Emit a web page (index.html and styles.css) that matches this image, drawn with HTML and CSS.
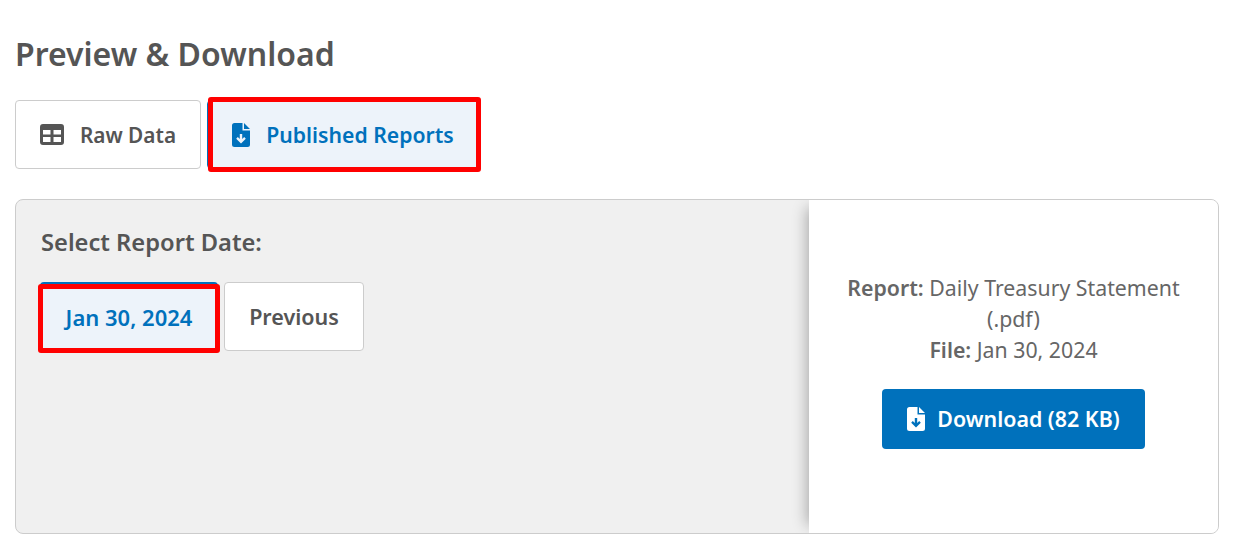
FILE: index.html
```html
<!DOCTYPE html>
<html lang="en">
<head>
<meta charset="utf-8">
<title>Preview &amp; Download</title>
<link rel="stylesheet" href="styles.css">
</head>
<body>
<h2 class="title">Preview &amp; Download</h2>
<div class="tabs">
  <button class="btn tab">
    <svg class="icon" width="24" height="21" viewBox="0 0 24 21"><path fill="currentColor" fill-rule="evenodd" d="M3 0h18a3 3 0 0 1 3 3v15a3 3 0 0 1-3 3H3a3 3 0 0 1-3-3V3a3 3 0 0 1 3-3zM3 6v4.500h7.500V6zM13.500 6v4.500H21V6zM3 13v5h7.500v-5zM13.500 13v5H21v-5z"/></svg>
    Raw Data
  </button>
  <button class="btn tab active marked">
    <svg class="icon" width="18" height="24" viewBox="0 0 18 24"><path fill="currentColor" fill-rule="evenodd" d="M2.500 0H10.500V7.500H18V21.500A2.500 2.500 0 0 1 15.500 24H2.500A2.500 2.500 0 0 1 0 21.500V2.500A2.500 2.500 0 0 1 2.500 0zM12 0L18 6H12zM7.800 11V16.100L5.800 14.100L4.200 15.700L9 20.500L13.800 15.700L12.200 14.100L10.200 16.100V11z"/></svg>
    Published Reports
  </button>
</div>
<section class="panel">
  <div class="dates">
    <h3 class="label">Select Report Date:</h3>
    <div class="date-row">
      <button class="btn date active marked">Jan 30, 2024</button>
      <button class="btn date">Previous</button>
    </div>
  </div>
  <aside class="detail">
    <p class="info"><b>Report:</b> Daily Treasury Statement (.pdf)<br><b>File:</b> Jan 30, 2024</p>
    <a class="download" href="#">
      <svg class="icon" width="18" height="24" viewBox="0 0 18 24"><path fill="currentColor" fill-rule="evenodd" d="M2.500 0H10.500V7.500H18V21.500A2.500 2.500 0 0 1 15.500 24H2.500A2.500 2.500 0 0 1 0 21.500V2.500A2.500 2.500 0 0 1 2.500 0zM12 0L18 6H12zM7.800 11V16.100L5.800 14.100L4.200 15.700L9 20.500L13.800 15.700L12.200 14.100L10.200 16.100V11z"/></svg>
      <span class="download-text">Download (82 KB)</span>
    </a>
  </aside>
</section>
</body>
</html>
```
FILE: styles.css
```css
* { box-sizing: border-box; }
body {
  margin: 0;
  padding: 0 22px 0 15px;
  background: #fff;
  color: #555;
  font-family: "Noto Sans", "Open Sans", sans-serif;
}
.title {
  margin: 0;
  padding-top: 34px;
  height: 100px;
  font-size: 32px;
  line-height: 40px;
  font-weight: 600;
}
.tabs { display: flex; gap: 6px; }
.btn {
  position: relative;
  display: flex;
  align-items: center;
  justify-content: center;
  height: 69px;
  background: #fff;
  border: 1px solid #ccc;
  border-radius: 4px;
  color: #555;
  font-family: inherit;
  font-size: 21px;
  font-weight: 600;
}
.tab { gap: 16px; padding: 0; font-size: 20.8px; }
.tab:first-child { width: 186px; }
.tab.active { width: 272px; font-size: 21.2px; }
.active {
  background: #edf3fa;
  border-color: #0071bc;
  color: #0071bc;
}
.marked::after {
  content: "";
  position: absolute;
  inset: -4px -3px -4px 0;
  border: 5px solid #f00;
  border-radius: 3px;
}
.date.marked { border-top-width: 2px; }
.date.marked::after { inset: 0 -3px -3px -3px; }
.panel {
  display: flex;
  height: 335px;
  margin-top: 30px;
  background: #f0f0f0;
  border: 1px solid #ccc;
  border-radius: 8px;
  overflow: hidden;
}
.dates { flex: 1; padding: 24px 24px; }
.label {
  margin: 0 0 22px 1px;
  font-size: 23.7px;
  line-height: 36px;
  font-weight: 600;
}
.date-row { display: flex; gap: 6px; }
.date { padding: 0; font-size: 21.5px; }
.date.active { width: 178px; font-size: 22px; }
.date:not(.active) { width: 140px; }
.detail {
  width: 409px;
  display: flex;
  flex-direction: column;
  align-items: center;
  justify-content: center;
  padding: 0 30px 12px;
  background: #fff;
  box-shadow: -10px 0 14px -8px rgba(0, 0, 0, 0.3);
}
.info {
  margin: 0 0 24px;
  font-size: 21.3px;
  line-height: 31px;
  text-align: center;
  color: #666;
}
.info b { font-weight: 600; }
.download {
  display: flex;
  align-items: center;
  justify-content: center;
  gap: 12px;
  width: 263px;
  height: 60px;
  background: #0071bc;
  border-radius: 4px;
  color: #fff;
  font-size: 21.4px;
  font-weight: 600;
  text-decoration: none;
}
.download-text { padding-bottom: 2px; }
.icon { flex: none; }
```
